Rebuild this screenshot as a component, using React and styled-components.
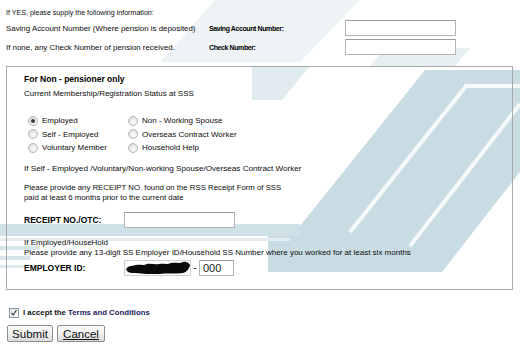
import React from 'react';
import styled, { createGlobalStyle } from 'styled-components';

const GlobalStyle = createGlobalStyle`
  html, body {
    margin: 0;
    padding: 0;
    background: #fff;
  }
  body {
    font-family: "Liberation Sans", Arial, sans-serif;
    font-size: 8px;
    color: #0c0c0c;
  }
`;

const Page = styled.div`
  position: relative;
  width: 520px;
  height: 355px;
  overflow: hidden;
  box-sizing: border-box;
  padding: 8px 0 0 6px;
`;

const Watermark = styled.svg`
  position: absolute;
  left: 0;
  top: 0;
  z-index: 0;
`;

const Content = styled.div`
  position: relative;
  z-index: 1;
`;

const Text = styled.div`
  font-size: ${(p) => p.$size || 8}px;
  line-height: ${(p) => p.$lh || 10}px;
  margin-top: ${(p) => p.$mt || 0}px;
  white-space: nowrap;
`;

const InfoGrid = styled.div`
  display: grid;
  grid-template-columns: 203px 136px 111px;
  grid-auto-rows: 16px;
  row-gap: 3px;
  margin-top: 2px;
  align-items: center;
  font-size: 7.9px;
`;

const Label = styled.span`
  font-weight: bold;
  font-size: ${(p) => p.$size || 7}px;
  letter-spacing: ${(p) => (p.$tight ? -0.4 : 0)}px;
  color: #000;
  white-space: nowrap;
`;

const TextBox = styled.input`
  box-sizing: border-box;
  width: ${(p) => p.$w || 111}px;
  height: 16px;
  margin: 0;
  padding: 0 3px;
  border: 1px solid #b4b4b4;
  border-top-color: #9c9c9c;
  background: #fff;
  font-family: "Liberation Sans", Arial, sans-serif;
  font-size: 11px;
  color: #222;
  outline: none;
`;

const Panel = styled.div`
  box-sizing: border-box;
  width: 507px;
  height: 224px;
  margin-top: 11px;
  border: 1px solid #a9a9a9;
  padding: 6px 0 0 17px;
`;

const Heading = styled.div`
  font-weight: bold;
  font-size: 8.5px;
  color: #000;
  line-height: 12px;
`;

const RadioGrid = styled.div`
  display: grid;
  grid-template-columns: 100px 150px;
  grid-auto-rows: 13.5px;
  margin-top: 14px;
  padding-left: 4px;
  font-size: 8px;
`;

const RadioItem = styled.label`
  display: flex;
  align-items: center;
  gap: 4px;
  white-space: nowrap;
`;

const RadioDot = styled.span`
  box-sizing: border-box;
  width: 10px;
  height: 10px;
  border-radius: 50%;
  border: 1px solid #b3b8bd;
  background: radial-gradient(circle at 60% 65%, #fdfdfd 0%, #e6e7e8 55%, #cfd2d4 100%);
  display: flex;
  align-items: center;
  justify-content: center;

  &::after {
    content: '';
    width: 4px;
    height: 4px;
    border-radius: 50%;
    background: ${(p) => (p.$checked ? '#3a3a3a' : 'transparent')};
  }
`;

const FieldRow = styled.div`
  display: flex;
  align-items: center;
  height: 16px;
  margin-top: ${(p) => p.$mt || 0}px;
`;

const FieldLabel = styled(Label)`
  width: 100px;
  font-size: 8.5px;
`;

const Redacted = styled.div`
  position: relative;
  box-sizing: border-box;
  width: 67px;
  height: 16px;
  border: 1px solid #cfcfcf;
  background: #fff;
`;

const Dash = styled.span`
  width: 8px;
  text-align: center;
  font-size: 10px;
`;

const Accept = styled.div`
  display: flex;
  align-items: center;
  gap: 4px;
  margin-top: 17px;
  padding-left: 3px;
  height: 11px;
`;

const CheckBox = styled.span`
  box-sizing: border-box;
  width: 10px;
  height: 10px;
  border: 1px solid #8a99a6;
  background: linear-gradient(135deg, #e4e6e8, #fdfdfd);
  display: flex;
  align-items: center;
  justify-content: center;
`;

const AcceptText = styled.span`
  font-weight: bold;
  font-size: 7.8px;
  color: #111;
`;

const TermsLink = styled.span`
  color: #1c1c5c;
`;

const Buttons = styled.div`
  display: flex;
  gap: 4px;
  margin-top: 7px;
  padding-left: 1px;
`;

const Button = styled.button`
  box-sizing: border-box;
  width: ${(p) => p.$w}px;
  height: 17px;
  padding: 0;
  margin: 0;
  border: 1px solid #8e8e8e;
  border-radius: 2px;
  background: linear-gradient(#fdfdfd, #ececec 60%, #dadada);
  font-family: "Liberation Sans", Arial, sans-serif;
  font-size: 11.5px;
  line-height: 14px;
  color: #111;
  text-decoration: ${(p) => (p.$u ? 'underline' : 'none')};
`;

const statuses = [
  ['Employed', true],
  ['Non - Working Spouse', false],
  ['Self - Employed', false],
  ['Overseas Contract Worker', false],
  ['Voluntary Member', false],
  ['Household Help', false],
];

function Background() {
  return (
    <Watermark width="520" height="355" viewBox="0 0 520 355">
      <polygon points="215,0 360,0 300,62 160,62" fill="#eef4f6" />
      <polygon points="385,48 470,48 455,66 370,66" fill="#e6eff2" />
      <polygon points="252,66 310,66 282,100 252,100" fill="#e0ebef" />
      <polygon points="425,70 520,70 520,172 442,272 268,272 268,226 300,226" fill="#c9dce3" />
      <rect x="0" y="224" width="300" height="12" fill="#cfe0e6" />
      <rect x="0" y="238" width="290" height="3" fill="#e2edf0" />
      <rect x="0" y="246" width="40" height="4" fill="#d6e5ea" />
      <rect x="0" y="256" width="30" height="4" fill="#d6e5ea" />
      <rect x="0" y="265" width="25" height="3" fill="#dce9ed" />
      <polyline points="520,86 466,86 350,232" fill="none" stroke="#f6f9fa" strokeWidth="4" />
      <polyline points="520,104 486,148 410,246" fill="none" stroke="#f6f9fa" strokeWidth="4" />
    </Watermark>
  );
}

function App() {
  return (
    <>
      <GlobalStyle />
      <Page>
        <Background />
        <Content>
          <Text $size={7.1}>If YES, please supply the following information:</Text>
          <InfoGrid>
            <span>Saving Account Number (Where pension is deposited)</span>
            <Label $tight>Saving Account Number:</Label>
            <TextBox />
            <span>If none, any Check Number of pension received.</span>
            <Label $tight>Check Number:</Label>
            <TextBox />
          </InfoGrid>

          <Panel>
            <Heading>For Non - pensioner only</Heading>
            <Text $mt={3} $lh={12}>Current Membership/Registration Status at SSS</Text>
            <RadioGrid>
              {statuses.map(([name, checked]) => (
                <RadioItem key={name}>
                  <RadioDot $checked={checked} />
                  {name}
                </RadioItem>
              ))}
            </RadioGrid>
            <Text $mt={9} $size={8.1}>If Self - Employed /Voluntary/Non-working Spouse/Overseas Contract Worker</Text>
            <Text $mt={9} $size={7.8}>Please provide any RECEIPT NO. found on the RSS Receipt Form of SSS</Text>
            <Text $size={7.8}>paid at least 6 months prior to the current date</Text>
            <FieldRow $mt={9}>
              <FieldLabel>RECEIPT NO./OTC:</FieldLabel>
              <TextBox />
            </FieldRow>
            <Text $mt={10}>If Employed/HouseHold</Text>
            <Text>Please provide any 13-digit SS Employer ID/Household SS Number where you worked for at least six months</Text>
            <FieldRow $mt={2}>
              <FieldLabel>EMPLOYER ID:</FieldLabel>
              <Redacted>
                <svg width="66" height="14" viewBox="0 0 66 14" style={{ position: 'absolute', left: 0, top: 0 }}>
                  <path
                    d="M1 8 C4 4 8 5 11 4 C15 3 18 5 22 3 C26 2 30 4 34 3 C38 2 42 4 46 2 C50 1 54 3 58 1 C61 0 64 2 65 4 C64 8 62 11 58 12 C50 13 42 12 34 13 C26 13 18 13 10 12 C6 12 2 12 1 8 Z"
                    fill="#0a0a0a"
                  />
                </svg>
              </Redacted>
              <Dash>-</Dash>
              <TextBox $w={35} defaultValue="000" />
            </FieldRow>
          </Panel>

          <Accept>
            <CheckBox>
              <svg width="8" height="8" viewBox="0 0 8 8">
                <path d="M1.5 4 L3.2 6 L6.5 1" fill="none" stroke="#4a4a4a" strokeWidth="1.3" />
              </svg>
            </CheckBox>
            <AcceptText>
              I accept the <TermsLink>Terms and Conditions</TermsLink>
            </AcceptText>
          </Accept>
          <Buttons>
            <Button $w={46}>Submit</Button>
            <Button $w={48} $u>Cancel</Button>
          </Buttons>
        </Content>
      </Page>
    </>
  );
}

export default App;
